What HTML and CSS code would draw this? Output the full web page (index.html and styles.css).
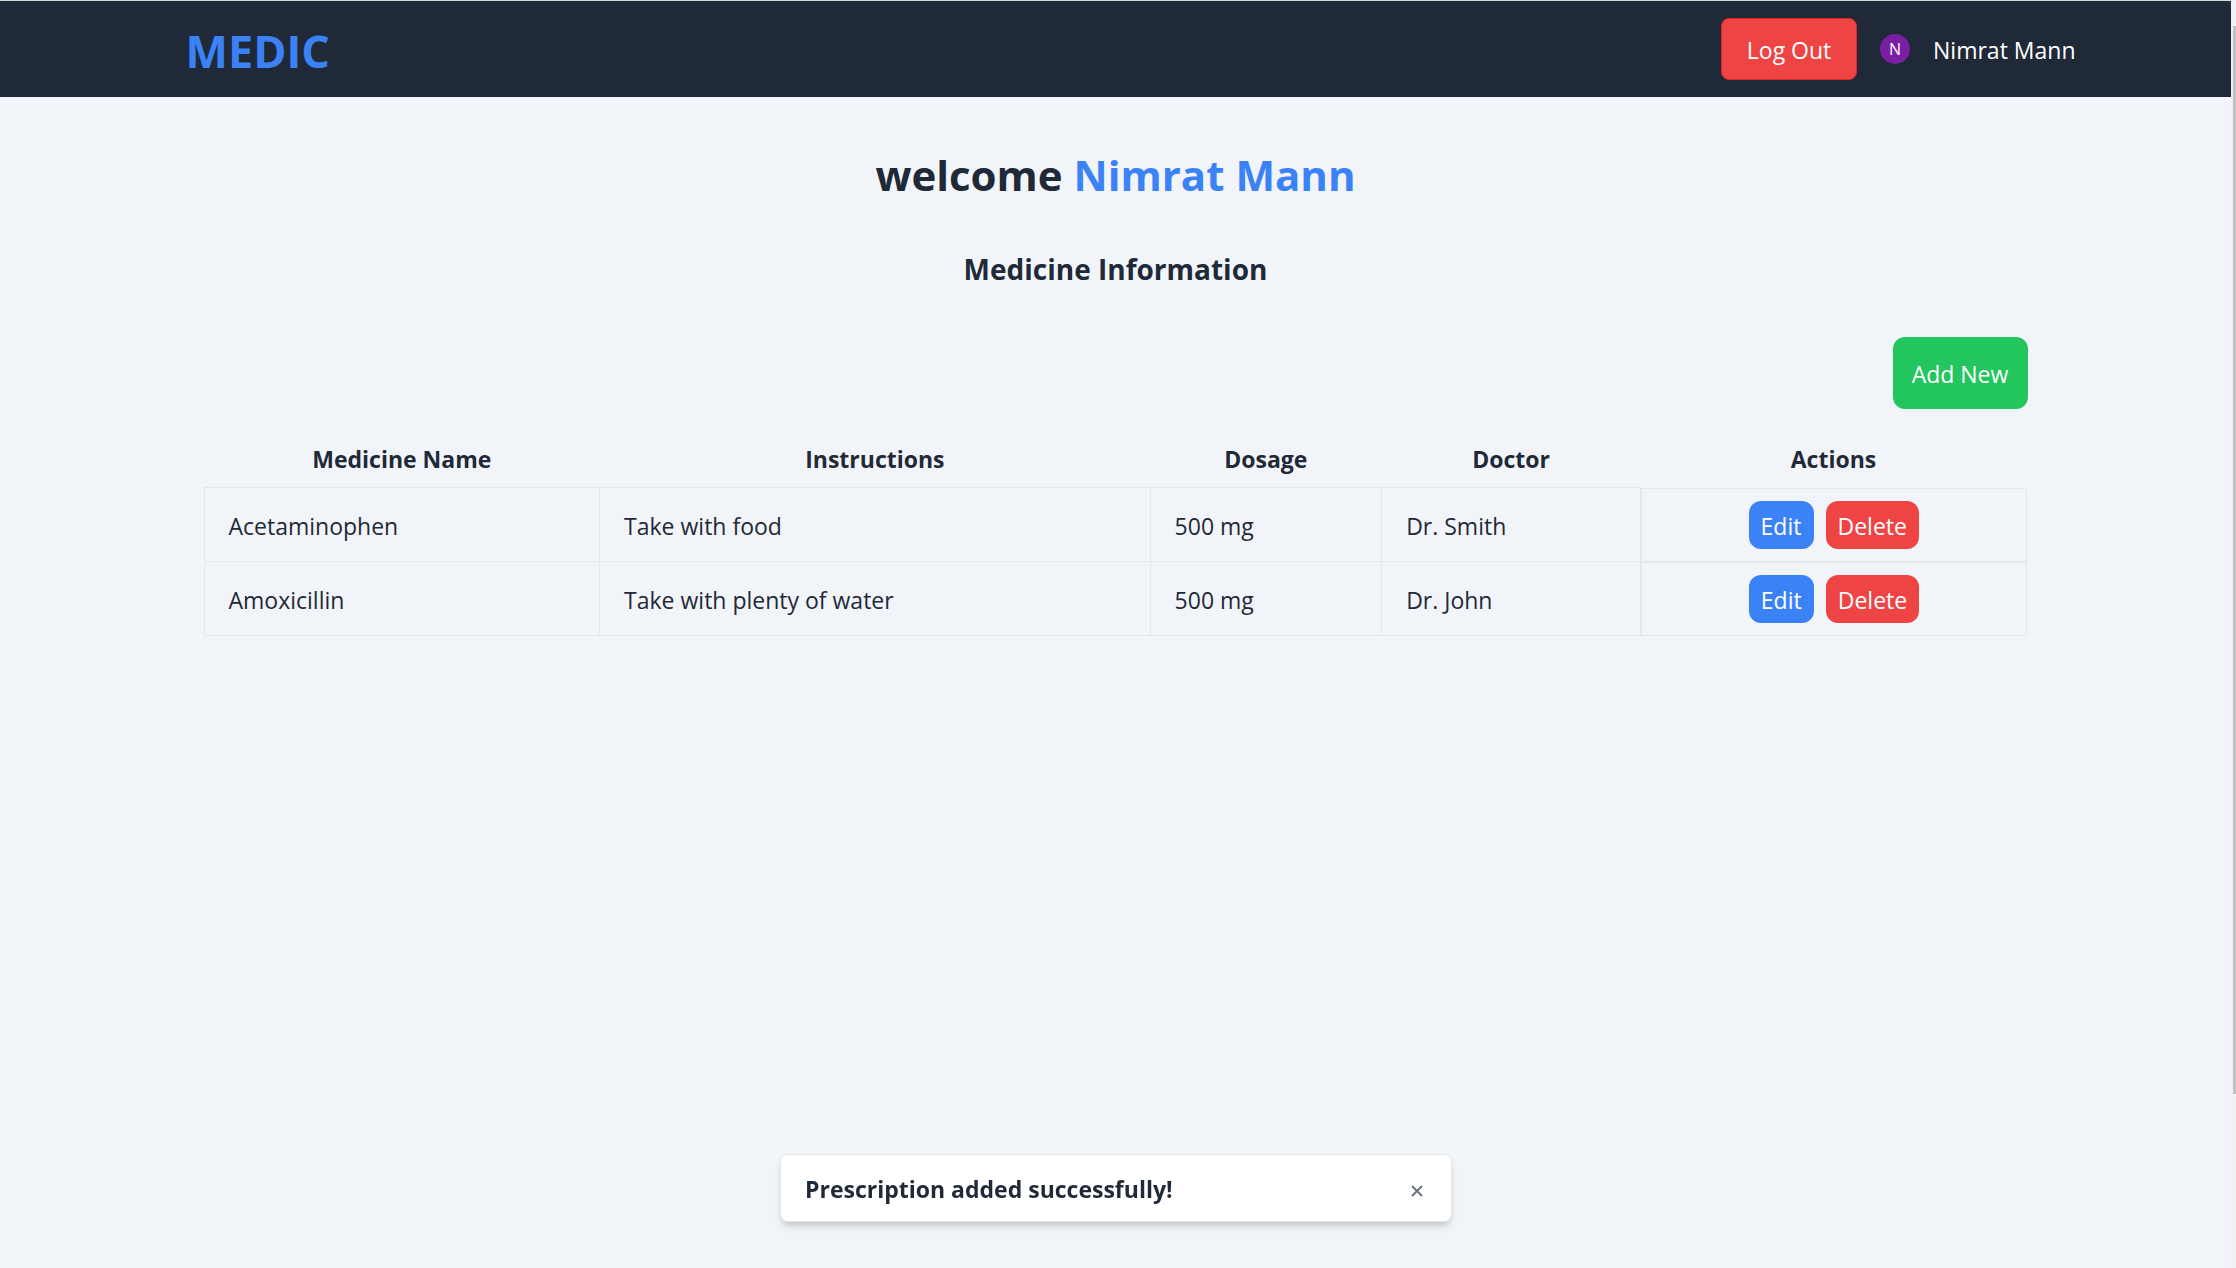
FILE: index.html
```html
<!DOCTYPE html>
<html lang="en">
<head>
<meta charset="utf-8">
<meta name="viewport" content="width=device-width, initial-scale=1">
<title>Medic</title>
<link rel="stylesheet" href="styles.css">
</head>
<body>
<div class="page">
  <header class="navbar">
    <nav class="navbar-inner">
      <a class="brand" href="#">MEDIC</a>
      <div class="account">
        <button class="logout" type="button">Log Out</button>
        <span class="avatar">N</span>
        <span class="user-name">Nimrat Mann</span>
      </div>
    </nav>
  </header>
  <main class="content">
    <h1 class="welcome">welcome <span class="accent">Nimrat Mann</span></h1>
    <h2 class="section-title">Medicine Information</h2>
    <div class="toolbar"><button class="btn add" type="button">Add New</button></div>
    <table class="medicines">
      <colgroup><col class="col-name"><col class="col-instructions"><col class="col-dosage"><col class="col-doctor"><col class="col-actions"></colgroup>
      <thead>
        <tr><th scope="col">Medicine Name</th><th scope="col">Instructions</th><th scope="col">Dosage</th><th scope="col">Doctor</th><th scope="col">Actions</th></tr>
      </thead>
      <tbody>
        <tr><td>Acetaminophen</td><td>Take with food</td><td>500 mg</td><td>Dr. Smith</td><td class="actions"><button class="btn edit" type="button">Edit</button><button class="btn delete" type="button">Delete</button></td></tr>
        <tr><td>Amoxicillin</td><td>Take with plenty of water</td><td>500 mg</td><td>Dr. John</td><td class="actions"><button class="btn edit" type="button">Edit</button><button class="btn delete" type="button">Delete</button></td></tr>
      </tbody>
    </table>
  </main>
  <div class="toast" role="status">
    <span class="toast-text">Prescription added successfully!</span>
    <button class="toast-close" type="button" aria-label="Close"><svg viewBox="0 0 12 12" width="12" height="12" aria-hidden="true"><path d="M1 1L11 11M11 1L1 11"/></svg></button>
  </div>
</div>
<div class="scrollbar" aria-hidden="true"><div class="scroll-thumb"></div></div>
</body>
</html>
```
FILE: styles.css
```css
* { box-sizing: border-box; }

body {
  margin: 0;
  display: flex;
  min-height: 100vh;
  background: #f1f5f9;
  color: #1f2937;
  font: 23px/36px "Segoe UI", "Open Sans", sans-serif;
}

button {
  font: inherit;
  color: #fff;
  border: 0;
  padding: 0;
  cursor: pointer;
}

.page {
  flex: 1;
  position: relative;
  border-top: 1px solid #d5dada;
}

.navbar { background: #1f2937; }

.navbar-inner {
  display: flex;
  justify-content: space-between;
  align-items: center;
  max-width: 1920px;
  height: 96px;
  margin: 0 auto;
  padding-left: 30px;
}

.brand {
  padding-top: 4px;
  color: #3b82f6;
  font-size: 45px;
  line-height: 60px;
  font-weight: 700;
  text-decoration: none;
}

.account {
  display: flex;
  align-items: center;
  gap: 23px;
  color: #fff;
}

.logout {
  min-width: 136px;
  height: 62px;
  padding: 2px 24px 0;
  background: #ef4444;
  border: 1px solid #dc2626;
  border-radius: 8px;
}

.avatar {
  width: 30px;
  height: 30px;
  border-radius: 50%;
  background: #7b1fa2;
  font-size: 16px;
  line-height: 30px;
  text-align: center;
}

.user-name { padding-top: 2px; }

.content {
  max-width: 1920px;
  margin: 0 auto;
  padding: 48px;
}

.welcome {
  margin: 0 0 40px;
  font-size: 42px;
  line-height: 60px;
  font-weight: 700;
  text-align: center;
}

.accent { color: #3b82f6; }

.section-title {
  margin: 0 0 44px;
  font-size: 28px;
  line-height: 48px;
  font-weight: 700;
  text-align: center;
}

.toolbar {
  display: flex;
  justify-content: flex-end;
  margin-bottom: 12px;
}

.btn {
  min-width: 65px;
  height: 48px;
  padding: 2px 12px 0;
  border-radius: 12px;
}

.add {
  min-width: 135px;
  height: 72px;
  background: #22c55e;
}

.edit { background: #3b82f6; }
.delete { background: #ef4444; }

.medicines {
  width: 100%;
  border-collapse: collapse;
  table-layout: fixed;
}

.col-name { width: 21.7%; }
.col-instructions { width: 30.2%; }
.col-dosage { width: 12.7%; }
.col-doctor { width: 14.2%; }
.col-actions { width: 21.2%; }

th {
  height: 66px;
  padding: 20px 24px 10px;
  font-weight: 700;
}

td {
  height: 74px;
  padding: 2px 24px 0;
  border: 1px solid #e5e7eb;
}

.actions {
  display: flex;
  justify-content: center;
  align-items: center;
  gap: 12px;
  padding: 0 24px;
}

.toast {
  position: fixed;
  bottom: 46px;
  left: calc(50% - 338px);
  display: flex;
  justify-content: space-between;
  align-items: center;
  width: 672px;
  height: 68px;
  padding: 2px 24px 0;
  background: #fff;
  border: 1px solid #e5e7eb;
  border-radius: 8px;
  box-shadow: 0 6px 9px -2px rgb(0 0 0 / 15%), 0 3px 6px -3px rgb(0 0 0 / 15%);
}

.toast-text { font-weight: 700; }

.toast-close {
  display: grid;
  place-items: center;
  width: 20px;
  height: 36px;
  padding-top: 4px;
  background: none;
}

.toast-close path {
  fill: none;
  stroke: #6b7280;
  stroke-width: 2;
}

.scrollbar {
  width: 5px;
  padding: 26px 0 0 2px;
  background: #f1f1f1;
}

.scroll-thumb {
  height: 86%;
  background: #c1c1c1;
}
```
